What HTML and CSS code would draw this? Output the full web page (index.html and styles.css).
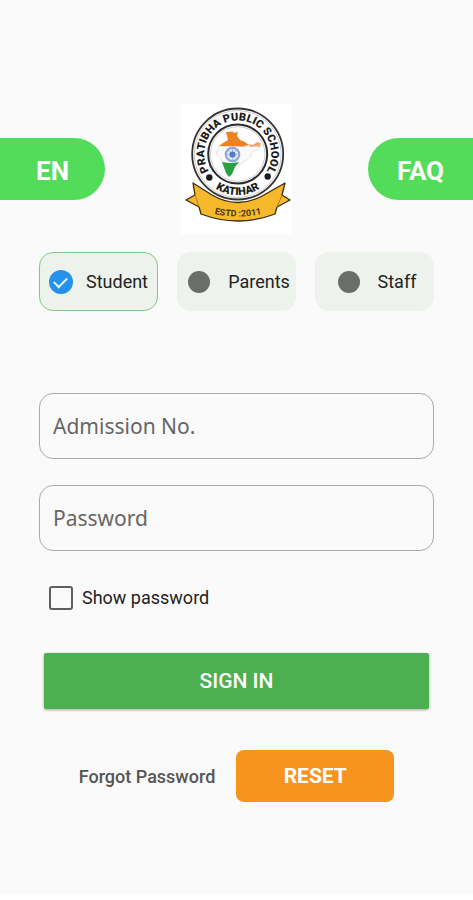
FILE: index.html
```html
<!DOCTYPE html>
<html lang="en">
<head>
    <meta charset="UTF-8">
    <meta name="viewport" content="width=device-width, initial-scale=1.0">
    <title>Pratibha Public School - Sign In</title>
    <link rel="stylesheet" href="styles.css">
</head>
<body>
    <div class="screen">
        <header class="top-bar">
            <button type="button" class="side-btn left">EN</button>
            <svg class="logo" viewBox="0 0 111 130" role="img" aria-label="Pratibha Public School, Katihar">
                <defs>
                    <path id="topArc" d="M30.300 70.600A33.500 33.500 0 1 1 83.100 70.600" />
                    <path id="bottomArc" d="M21.700 71.500A41 41 0 0 0 91.700 71.500" />
                    <path id="ribbonArc" d="M22 107Q57 118 92 107" />
                </defs>
                <rect width="111" height="130" fill="#fff" />
                <circle cx="56.700" cy="50" r="45.500" fill="#fff" stroke="#333" stroke-width="1.800" />
                <circle cx="56.700" cy="50" r="43.500" fill="none" stroke="#aaa" stroke-width=".6" />
                <circle cx="56.700" cy="50" r="29.500" fill="#fff" stroke="#2b2b2b" stroke-width="2" />
                <circle cx="56.700" cy="50" r="27.300" fill="none" stroke="#aaa" stroke-width=".6" />
                <!-- map -->
                <path d="M38 42L67 42L79 43L77 46L72 47L69 53L64 57L60 60L42 59L39 54L35 50Z" fill="#fafafa" stroke="#ddd" stroke-width=".8" />
                <path d="M45 28L51 27.500L54 29L57 27.500L56 32L59 36L64 38L68 41L62 42.500L38 42L42 39L47 36Z" fill="#ee8222" />
                <path d="M67 40L72 41L76 38L80 39L79 43L75 42L70 43Z" fill="#f3a469" />
                <path d="M41 58Q49 60 58 58L54 63L51 70L48 73L45 69Z" fill="#27a243" />
                <circle cx="51.500" cy="50.500" r="6.800" fill="#dce6f7" stroke="#8ba5d8" stroke-width="2" />
                <path d="M51.500 45V56M46 50.500H57M47.500 46.500L55.500 54.500M55.500 46.500L47.500 54.500" stroke="#8fa8db" stroke-width=".7" />
                <circle cx="51.500" cy="50.500" r="3" fill="#5579c4" />
                <text class="ring-text"><textPath href="#topArc" startOffset="50%">PRATIBHA PUBLIC SCHOOL</textPath></text>
                <text class="ring-text"><textPath href="#bottomArc" startOffset="50%">KATIHAR</textPath></text>
                <circle cx="28.300" cy="73.500" r="3.200" fill="#1c1c1c" />
                <circle cx="86.700" cy="72.500" r="3.200" fill="#1c1c1c" />
                <!-- ribbon -->
                <path d="M12 79L31 91Q57 106 83 91L104 79L101 91L109 96L96 103L94 110Q57 124 20 110L18 103L5 96L14 91Z" fill="#f7b92c" stroke="#3a2c0c" stroke-width="1.300" stroke-linejoin="round" />
                <path d="M14 91L18 103M101 91L96 103" stroke="#b67f16" stroke-width="1" />
                <text class="ribbon-text"><textPath href="#ribbonArc" startOffset="50%">ESTD :2011</textPath></text>
            </svg>
            <button type="button" class="side-btn right">FAQ</button>
        </header>

        <form class="login">
            <div class="roles">
                <label class="role">
                    <input type="radio" name="role" value="student" checked>
                    <span>Student</span>
                </label>
                <label class="role">
                    <input type="radio" name="role" value="parents">
                    <span>Parents</span>
                </label>
                <label class="role">
                    <input type="radio" name="role" value="staff">
                    <span>Staff</span>
                </label>
            </div>

            <div class="fields">
                <input type="text" id="admission" placeholder="Admission No." aria-label="Admission No.">
                <input type="password" id="password" placeholder="Password" aria-label="Password">
            </div>

            <label class="show-password">
                <input type="checkbox" id="showPassword" onchange="togglePassword()">
                <span>Show password</span>
            </label>

            <button type="submit" class="sign-in">SIGN IN</button>

            <div class="forgot">
                <span>Forgot Password</span>
                <button type="button" class="reset">RESET</button>
            </div>
        </form>
    </div>

    <script>
        function togglePassword() {
            const show = document.getElementById("showPassword").checked;
            document.getElementById("password").type = show ? "text" : "password";
        }
    </script>
</body>
</html>
```
FILE: styles.css
```css
* {
    box-sizing: border-box;
}

body {
    margin: 0;
    background: #fff;
    font-family: Roboto, Arial, sans-serif;
    color: #222;
}

button, input {
    font-family: inherit;
    margin: 0;
}

button {
    border: none;
    color: #fff;
    cursor: pointer;
}

.screen {
    min-height: calc(100vh - 6px);
    padding: 104px 0 40px;
    background: #fafafa;
}

.top-bar {
    display: flex;
    justify-content: space-between;
    align-items: center;
}

.side-btn {
    width: 105px;
    height: 62px;
    padding: 4px 0 0;
    background: #52dc5a;
    font-size: 26px;
    font-weight: bold;
}

.side-btn.left {
    border-radius: 0 31px 31px 0;
}

.side-btn.right {
    border-radius: 31px 0 0 31px;
}

.logo {
    width: 111px;
    height: 130px;
}

.ring-text {
    font-size: 11px;
    font-weight: 900;
    fill: #1c1c1c;
    text-anchor: middle;
}

.ribbon-text {
    font-size: 9px;
    font-weight: bold;
    fill: #4a380c;
    text-anchor: middle;
}

.login {
    padding: 18px 39px 0;
}

.roles {
    display: grid;
    grid-template-columns: repeat(3, 1fr);
    gap: 19px;
}

.role {
    display: flex;
    justify-content: center;
    align-items: center;
    gap: 17px;
    height: 59px;
    padding-left: 4px;
    border-radius: 14px;
    background: #eef2ed;
    font-size: 18px;
    cursor: pointer;
}

.role input {
    appearance: none;
    flex: none;
    width: 24px;
    height: 24px;
    border: 1px solid transparent;
    border-radius: 50%;
    background: #6a6d69 padding-box;
}

.role:has(input:checked) {
    gap: 13px;
    padding-left: 0;
    border: 1px solid #7fcb85;
}

.role input:checked {
    display: grid;
    place-items: center;
    border: none;
    background: #2491eb;
}

.role input:checked::before {
    content: "";
    width: 11px;
    height: 6px;
    border: solid #e4f3ff;
    border-width: 0 0 2px 2px;
    transform: translateY(-1px) rotate(-45deg);
}

.fields {
    display: grid;
    gap: 26px;
    margin-top: 82px;
}

.fields input {
    width: 100%;
    height: 66px;
    padding: 0 13px;
    border: 1px solid #aaa;
    border-radius: 14px;
    background: transparent;
    font-family: "Noto Sans", "Open Sans", sans-serif;
    font-size: 21px;
    color: #333;
}

.fields input::placeholder {
    color: #666;
    opacity: 1;
}

.show-password {
    display: flex;
    align-items: center;
    gap: 9px;
    width: fit-content;
    margin: 34px 0 0 10px;
    font-size: 18px;
    line-height: 26px;
}

.show-password input {
    appearance: none;
    width: 24px;
    height: 24px;
    border: 2px solid #5f5f5f;
    border-radius: 3px;
}

.show-password input:checked {
    background: #4caf50;
}

.sign-in {
    display: block;
    width: calc(100% - 10px);
    height: 56px;
    margin: 42px auto 0;
    border-radius: 2px;
    background: #4caf50;
    box-shadow: 0 1px 3px rgba(0, 0, 0, 0.35);
    font-size: 21px;
    font-weight: 500;
}

.forgot {
    display: flex;
    justify-content: center;
    align-items: center;
    gap: 21px;
    margin-top: 41px;
    font-size: 18px;
    font-weight: 500;
    color: #555;
}

.reset {
    width: 158px;
    height: 52px;
    border-radius: 8px;
    background: #f7941d;
    font-size: 21px;
    font-weight: bold;
}
```
